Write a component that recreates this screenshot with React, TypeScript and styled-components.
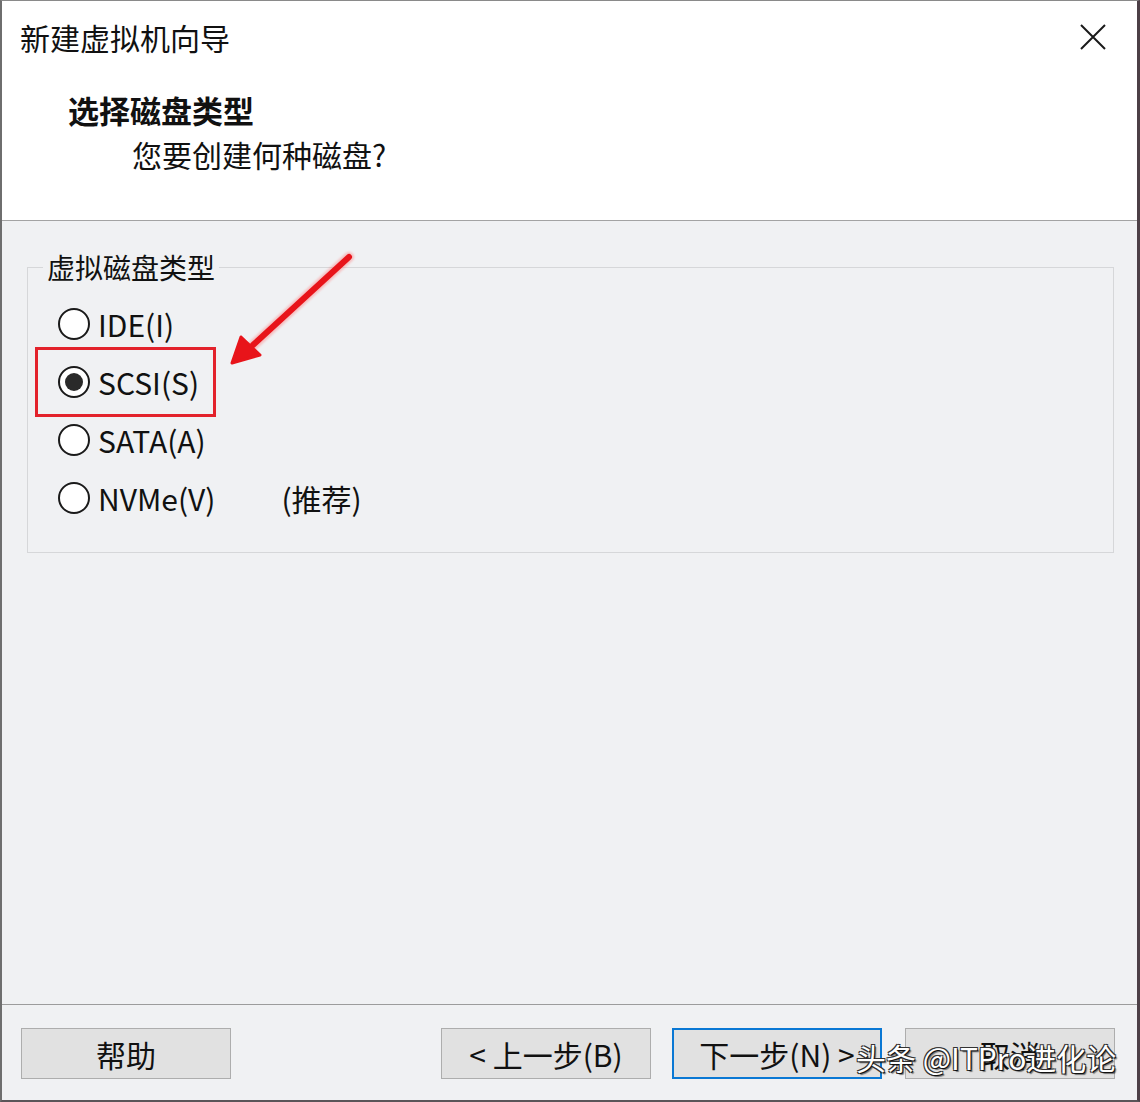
import React from "react";
import styled, { createGlobalStyle } from "styled-components";

const Global = createGlobalStyle`
  html, body { margin: 0; padding: 0; background: #ffffff; }
  * { box-sizing: border-box; }
`;

const FONT = `"Noto Sans CJK SC", "Noto Sans", sans-serif`;

const Window = styled.div`
  position: relative;
  width: 1140px;
  height: 1102px;
  display: flex;
  flex-direction: column;
  border-top: 1px solid #8a8a8a;
  border-left: 2px solid #6e6e6e;
  border-right: 3px solid #4c3f46;
  border-bottom: 2px solid #5a5458;
  font-family: ${FONT};
  color: #111;
  overflow: hidden;
`;

const Header = styled.div`
  height: 220px;
  flex: none;
  background: #ffffff;
  border-bottom: 1px solid #a3a3a3;
  display: flex;
  flex-direction: column;
`;

const TitleBar = styled.div`
  display: flex;
  align-items: center;
  justify-content: space-between;
  height: 76px;
  padding: 0 30px 0 18px;
`;

const Title = styled.div`
  font-size: 30px;
  line-height: 1;
  margin-top: -4px;
`;

const CloseButton = styled.button`
  width: 28px;
  height: 28px;
  padding: 0;
  border: none;
  background: transparent;
  display: flex;
  align-items: center;
  justify-content: center;
  margin-top: -4px;
`;

const Heading = styled.div`
  font-size: 31px;
  font-weight: 700;
  line-height: 1;
  padding-left: 66px;
  margin-top: 17px;
`;

const SubHeading = styled.div`
  font-size: 30px;
  line-height: 1;
  padding-left: 130px;
  margin-top: 14px;
`;

const Body = styled.div`
  flex: 1;
  background: #f0f1f3;
  padding: 30px 25px 0 25px;
  position: relative;
`;

const GroupBox = styled.fieldset`
  margin: 0;
  width: 1087px;
  border: 1px solid #d6d7d9;
  padding: 0 0 25px 30px;
  background: #f0f1f3;
`;

const Legend = styled.legend`
  font-size: 28px;
  line-height: 1.2;
  padding: 0 4px;
  margin-left: -15px;
`;

const OptionRow = styled.label`
  display: flex;
  align-items: center;
  height: 58px;
  font-size: 30px;
  line-height: 1;
  gap: 8px;
  &:first-of-type { margin-top: 10px; }
`;

const RadioCircle = styled.span<{ $checked?: boolean }>`
  width: 32px;
  height: 32px;
  border-radius: 50%;
  border: 2px solid #1a1a1a;
  background: #ffffff;
  display: flex;
  align-items: center;
  justify-content: center;
  flex: none;
  &::after {
    content: "";
    display: ${(p) => (p.$checked ? "block" : "none")};
    width: 18px;
    height: 18px;
    border-radius: 50%;
    background: #2a2a2a;
  }
`;

const Note = styled.span`
  margin-left: 58px;
`;

const Highlight = styled.div`
  position: absolute;
  left: 33px;
  top: 126px;
  width: 181px;
  height: 70px;
  border: 3px solid #e3222b;
`;

const ArrowSvg = styled.svg`
  position: absolute;
  left: 215px;
  top: 20px;
  overflow: visible;
`;

const Footer = styled.div`
  height: 96px;
  flex: none;
  background: #f0f1f3;
  border-top: 1px solid #9c9c9c;
  display: flex;
  align-items: flex-start;
  padding: 23px 0 0 19px;
  position: relative;
`;

const Button = styled.button<{ $primary?: boolean }>`
  width: 210px;
  height: 51px;
  font-family: ${FONT};
  font-size: 30px;
  line-height: 1;
  color: #111;
  background: #e1e1e1;
  border: ${(p) => (p.$primary ? "2px solid #0a78d4" : "1px solid #adadad")};
  padding: 0;
  display: flex;
  align-items: center;
  justify-content: center;
  flex: none;
`;

const Spacer = styled.div`
  width: 210px;
  flex: none;
`;

const NavGroup = styled.div`
  display: flex;
  gap: 21px;
  margin-right: 23px;
`;

const Watermark = styled.div`
  position: absolute;
  left: 854px;
  top: 37px;
  font-family: ${FONT};
  font-size: 30px;
  line-height: 1;
  color: #ffffff;
  text-shadow: 1px 1px 0 #111, -1px -1px 0 #333, 1px -1px 0 #333, -1px 1px 0 #333, 2px 2px 1px rgba(0,0,0,0.5);
  pointer-events: none;
  white-space: nowrap;
`;

const options = [
  { label: "IDE(I)", checked: false },
  { label: "SCSI(S)", checked: true },
  { label: "SATA(A)", checked: false },
  { label: "NVMe(V)", checked: false, note: "(推荐)" },
];

export default function App() {
  return (
    <>
      <Global />
      <Window>
        <Header>
          <TitleBar>
            <Title>新建虚拟机向导</Title>
            <CloseButton aria-label="close">
              <svg width="26" height="26" viewBox="0 0 26 26">
                <path d="M1 1 L25 25 M25 1 L1 25" stroke="#1a1a1a" strokeWidth="2" />
              </svg>
            </CloseButton>
          </TitleBar>
          <Heading>选择磁盘类型</Heading>
          <SubHeading>您要创建何种磁盘?</SubHeading>
        </Header>
        <Body>
          <GroupBox>
            <Legend>虚拟磁盘类型</Legend>
            {options.map((o) => (
              <OptionRow key={o.label}>
                <RadioCircle $checked={o.checked} />
                <span>{o.label}</span>
                {o.note && <Note>{o.note}</Note>}
              </OptionRow>
            ))}
          </GroupBox>
          <Highlight />
          <ArrowSvg width="140" height="120" viewBox="0 0 140 120">
            <defs>
              <filter id="glow" x="-20%" y="-20%" width="140%" height="140%">
                <feGaussianBlur stdDeviation="1.2" />
              </filter>
            </defs>
            <g filter="url(#glow)" opacity="0.35">
              <path d="M132 16 L32 108" stroke="#ff6060" strokeWidth="10" strokeLinecap="round" />
            </g>
            <path d="M132 16 L36 104" stroke="#e8141a" strokeWidth="6" strokeLinecap="round" />
            <path d="M15 122 L24 96 L43 114 Z" fill="#e8141a" stroke="#e8141a" strokeWidth="3" strokeLinejoin="round" />
          </ArrowSvg>
        </Body>
        <Footer>
          <Button>帮助</Button>
          <Spacer />
          <NavGroup>
            <Button>&lt; 上一步(B)</Button>
            <Button $primary>下一步(N) &gt;</Button>
          </NavGroup>
          <Button>取消</Button>
          <Watermark>头条 @ITPro进化论</Watermark>
        </Footer>
      </Window>
    </>
  );
}
